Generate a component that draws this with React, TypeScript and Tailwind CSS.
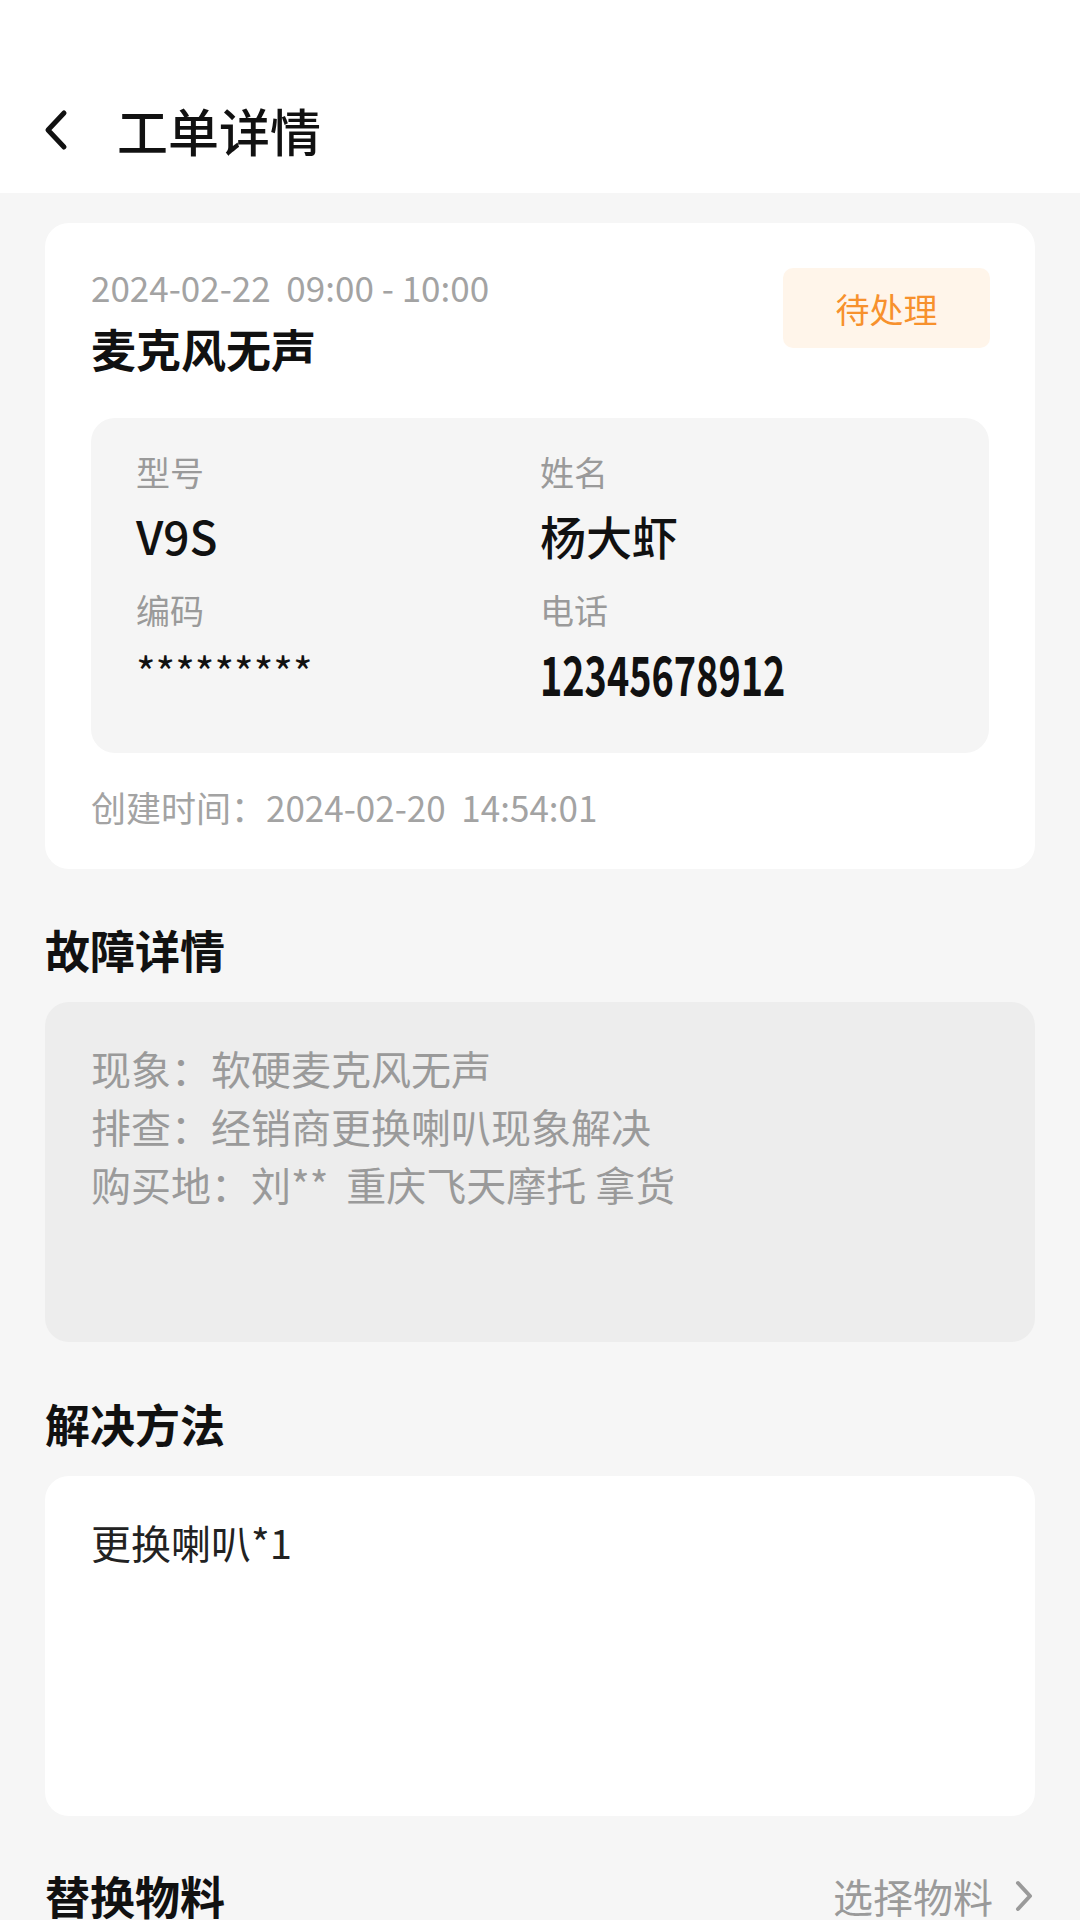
import React from "react";

const FONT = "font-['Noto_Sans_CJK_SC','Noto_Sans',sans-serif]";

type Field = { label: string; value: string; kind?: "mask" | "phone" };

const fields: Field[] = [
  { label: "型号", value: "V9S" },
  { label: "姓名", value: "杨大虾" },
  { label: "编码", value: "*********", kind: "mask" },
  { label: "电话", value: "12345678912", kind: "phone" },
];

function BackIcon() {
  return (
    <svg width="24" height="42" viewBox="0 0 24 42" fill="none">
      <polyline
        points="20,4 4,21 20,38"
        stroke="#111"
        strokeWidth="5"
        strokeLinecap="round"
        strokeLinejoin="round"
      />
    </svg>
  );
}

function ChevronRight() {
  return (
    <svg width="22" height="32" viewBox="0 0 22 32" fill="none">
      <polyline
        points="5,3 17,16 5,29"
        stroke="#9a9a9a"
        strokeWidth="4"
        strokeLinecap="round"
        strokeLinejoin="round"
      />
    </svg>
  );
}

function FieldCell({ field }: { field: Field }) {
  return (
    <div className="flex flex-col">
      <span className="h-[48px] text-[34px] leading-[48px] text-[#9a9a9a]">{field.label}</span>
      {field.kind === "phone" ? (
        <span className="mt-[9px] h-[60px] text-[54px] font-bold leading-[60px] text-[#111]">
          <span className="inline-block origin-left scale-x-[0.7]">{field.value}</span>
        </span>
      ) : (
        <span
          className={
            field.kind === "mask"
              ? "mt-[9px] h-[60px] text-[42px] leading-[56px] text-[#111]"
              : "mt-[9px] h-[60px] text-[46px] font-medium leading-[60px] text-[#111]"
          }
        >
          {field.value}
        </span>
      )}
    </div>
  );
}

function SectionTitle({ children }: { children: React.ReactNode }) {
  return <h2 className="h-[60px] text-[45px] font-bold leading-[60px] text-[#111]">{children}</h2>;
}

export default function App() {
  return (
    <div className={`${FONT} min-h-[1920px] w-[1080px] overflow-hidden bg-[#f6f6f6]`}>
      {/* header */}
      <header className="h-[193px] bg-white pt-[98px]">
        <div className="flex h-[64px] items-center pl-[44px]">
          <BackIcon />
          <h1 className="ml-[49px] text-[51px] font-medium leading-[64px] text-[#111]">工单详情</h1>
        </div>
      </header>

      <main className="px-[45px] pt-[30px]">
        {/* order card */}
        <section className="rounded-[24px] bg-white px-[46px] pb-[38px] pt-[40px]">
          <div className="flex items-start justify-between">
            <div className="flex flex-col">
              <span className="h-[48px] text-[35px] leading-[48px] text-[#a3a3a3]">
                2024-02-22&nbsp;&nbsp;09:00 - 10:00
              </span>
              <span className="mt-[8px] h-[60px] text-[45px] font-bold leading-[60px] text-[#111]">
                麦克风无声
              </span>
            </div>
            <span className="mr-[-1px] mt-[5px] flex h-[80px] w-[207px] items-center justify-center rounded-[10px] bg-[#fff5ea] text-[34px] text-[#f7912d]">
              待处理
            </span>
          </div>

          <div className="mt-[39px] grid grid-cols-2 gap-y-[21px] rounded-[24px] bg-[#f5f5f5] px-[45px] pb-[50px] pt-[30px]">
            {fields.map(f => (
              <FieldCell key={f.label} field={f} />
            ))}
          </div>

          <p className="mt-[30px] h-[48px] text-[35px] leading-[48px] text-[#a3a3a3]">
            创建时间：2024-02-20&nbsp;&nbsp;14:54:01
          </p>
        </section>

        <div className="mt-[51px]">
          <SectionTitle>故障详情</SectionTitle>
        </div>
        <div className="mt-[22px] h-[340px] rounded-[24px] bg-[#ededed] px-[46px] pt-[37px] text-[40px] leading-[58px] text-[#9a9a9a]">
          <p>现象：软硬麦克风无声</p>
          <p>排查：经销商更换喇叭现象解决</p>
          <p>购买地：刘**&nbsp;&nbsp;重庆飞天摩托 拿货</p>
        </div>

        <div className="mt-[52px]">
          <SectionTitle>解决方法</SectionTitle>
        </div>
        <div className="mt-[22px] h-[340px] rounded-[24px] bg-white px-[46px] pt-[37px] text-[40px] leading-[58px] text-[#222]">
          更换喇叭*1
        </div>

        <div className="mt-[50px] flex items-center justify-between">
          <SectionTitle>替换物料</SectionTitle>
          <div className="flex items-center gap-[20px]">
            <span className="text-[40px] leading-[56px] text-[#9a9a9a]">选择物料</span>
            <ChevronRight />
          </div>
        </div>
      </main>
    </div>
  );
}
